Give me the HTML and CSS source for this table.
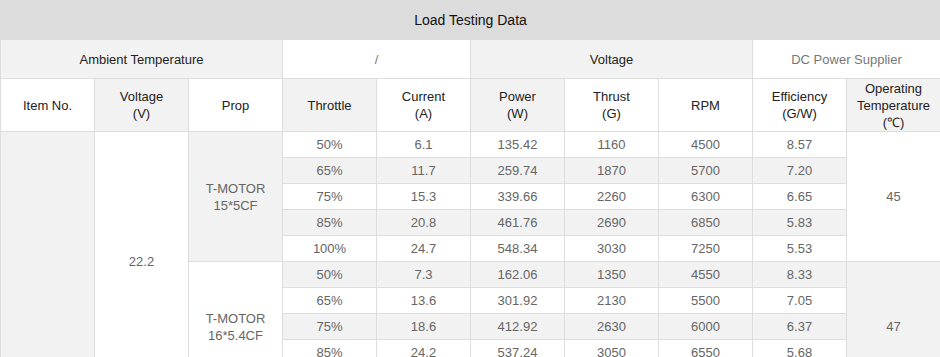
FILE: index.html
```html
<!DOCTYPE html>
<html lang="en">
<head>
<meta charset="utf-8">
<title>Load Testing Data</title>
<link rel="stylesheet" href="styles.css">
</head>
<body>
<table class="data">
  <colgroup>
    <col><col><col><col><col><col><col><col><col><col>
  </colgroup>
  <tr class="r-title"><td colspan="10" class="title">Load Testing Data</td></tr>
  <tr class="r-group">
    <td colspan="3" class="g">Ambient Temperature</td>
    <td colspan="2" class="muted">/</td>
    <td colspan="3" class="g">Voltage</td>
    <td colspan="2" class="muted">DC Power Supplier</td>
  </tr>
  <tr class="r-head">
    <td>Item No.</td>
    <td class="g">Voltage<br>(V)</td>
    <td>Prop</td>
    <td class="g">Throttle</td>
    <td>Current<br>(A)</td>
    <td class="g">Power<br>(W)</td>
    <td>Thrust<br>(G)</td>
    <td>RPM</td>
    <td>Efficiency<br>(G/W)</td>
    <td class="g">Operating<br>Temperature<br>(℃)</td>
  </tr>
  <tr class="r">
    <td rowspan="10" class="g v"></td>
    <td rowspan="10" class="v">22.2</td>
    <td rowspan="5" class="g v">T-MOTOR<br>15*5CF</td>
    <td>50%</td><td>6.1</td><td>135.42</td><td>1160</td><td>4500</td><td>8.57</td>
    <td rowspan="5" class="v">45</td>
  </tr>
  <tr class="r g"><td>65%</td><td>11.7</td><td>259.74</td><td>1870</td><td>5700</td><td>7.20</td></tr>
  <tr class="r"><td>75%</td><td>15.3</td><td>339.66</td><td>2260</td><td>6300</td><td>6.65</td></tr>
  <tr class="r g"><td>85%</td><td>20.8</td><td>461.76</td><td>2690</td><td>6850</td><td>5.83</td></tr>
  <tr class="r"><td>100%</td><td>24.7</td><td>548.34</td><td>3030</td><td>7250</td><td>5.53</td></tr>
  <tr class="r g">
    <td rowspan="5" class="w v">T-MOTOR<br>16*5.4CF</td>
    <td>50%</td><td>7.3</td><td>162.06</td><td>1350</td><td>4550</td><td>8.33</td>
    <td rowspan="5" class="v">47</td>
  </tr>
  <tr class="r"><td>65%</td><td>13.6</td><td>301.92</td><td>2130</td><td>5500</td><td>7.05</td></tr>
  <tr class="r g"><td>75%</td><td>18.6</td><td>412.92</td><td>2630</td><td>6000</td><td>6.37</td></tr>
  <tr class="r"><td>85%</td><td>24.2</td><td>537.24</td><td>3050</td><td>6550</td><td>5.68</td></tr>
  <tr class="r g"><td>100%</td><td></td><td></td><td></td><td></td><td></td></tr>
</table>
</body>
</html>
```
FILE: styles.css
```css
html, body {
  margin: 0;
  padding: 0;
  background: #fff;
  overflow: hidden;
}

.data {
  border-collapse: collapse;
  table-layout: fixed;
  width: 941px;
  font-family: "Liberation Sans", Arial, sans-serif;
  font-size: 13px;
  line-height: 17px;
  color: #666;
}

.data col {
  width: 94px;
}

.data td {
  border: 1px solid #dddddd;
  text-align: center;
  vertical-align: middle;
  padding: 0;
}

.data .g,
.data tr.g td {
  background: #f2f2f2;
}

.data tr.g td.w {
  background: #fff;
}

.r-title td.title {
  background: #dcdcdc;
  border-color: #dcdcdc;
  border-bottom-color: #dddddd;
  color: #111;
  font-size: 14px;
  height: 38px;
}

.r-group td {
  height: 38px;
  color: #222;
}

.r-group td.muted {
  color: #777;
}

.r-head td {
  height: 52px;
  color: #222;
}

.r td {
  height: 25px;
}
```
